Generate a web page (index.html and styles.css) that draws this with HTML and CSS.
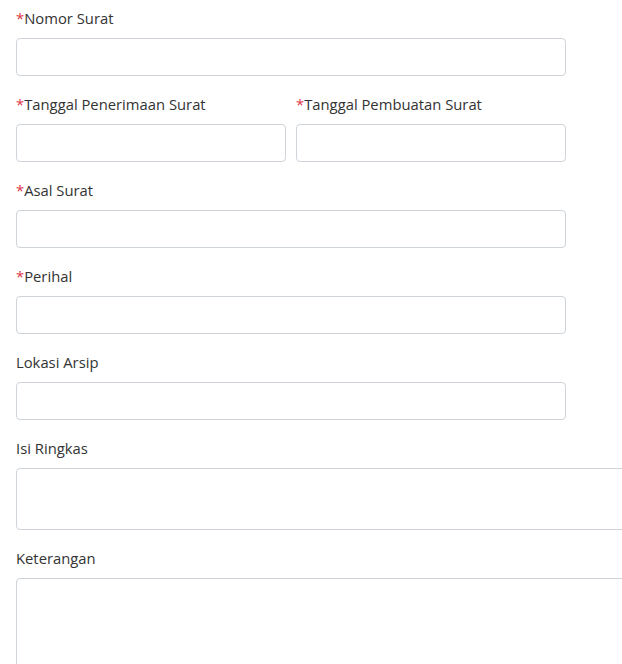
FILE: index.html
```html
<!DOCTYPE html>
<html lang="id">
<head>
<meta charset="utf-8">
<title>Form Surat</title>
<link rel="stylesheet" href="styles.css">
</head>
<body>
<form class="form">
  <div class="field">
    <label class="label"><span class="req">*</span>Nomor Surat</label>
    <input class="input" type="text">
  </div>
  <div class="row">
    <div class="field">
      <label class="label"><span class="req">*</span>Tanggal Penerimaan Surat</label>
      <input class="input" type="text">
    </div>
    <div class="field">
      <label class="label"><span class="req">*</span>Tanggal Pembuatan Surat</label>
      <input class="input" type="text">
    </div>
  </div>
  <div class="field">
    <label class="label"><span class="req">*</span>Asal Surat</label>
    <input class="input" type="text">
  </div>
  <div class="field">
    <label class="label"><span class="req">*</span>Perihal</label>
    <input class="input" type="text">
  </div>
  <div class="field">
    <label class="label">Lokasi Arsip</label>
    <input class="input" type="text">
  </div>
  <div class="field wide">
    <label class="label">Isi Ringkas</label>
    <textarea class="input area area-short"></textarea>
  </div>
  <div class="field wide">
    <label class="label">Keterangan</label>
    <textarea class="input area area-tall"></textarea>
  </div>
</form>
</body>
</html>
```
FILE: styles.css
```css
html, body {
  margin: 0;
  padding: 0;
  background: #ffffff;
  overflow: hidden;
}
body {
  font-family: "Open Sans", "Noto Sans", "Liberation Sans", sans-serif;
  font-size: 14.8px;
  color: #333333;
}
.form {
  display: flex;
  flex-direction: column;
  gap: 18px;
  padding: 8px 0 0 16px;
  width: 550px;
}
.field {
  display: flex;
  flex-direction: column;
  gap: 8px;
  min-width: 0;
}
.row {
  display: grid;
  grid-template-columns: 270px 270px;
  gap: 10px;
}
.label {
  display: block;
  height: 22px;
  line-height: 20px;
}
.req {
  color: #dc3545;
}
.input {
  box-sizing: border-box;
  display: block;
  width: 100%;
  height: 38px;
  margin: 0;
  padding: 6px 12px;
  border: 1px solid #ced4da;
  border-radius: 4px;
  background: #ffffff;
  font: inherit;
  color: inherit;
}
.wide {
  width: 640px;
}
.area {
  resize: none;
}
.area-short {
  height: 62px;
}
.area-tall {
  height: 90px;
}
```
